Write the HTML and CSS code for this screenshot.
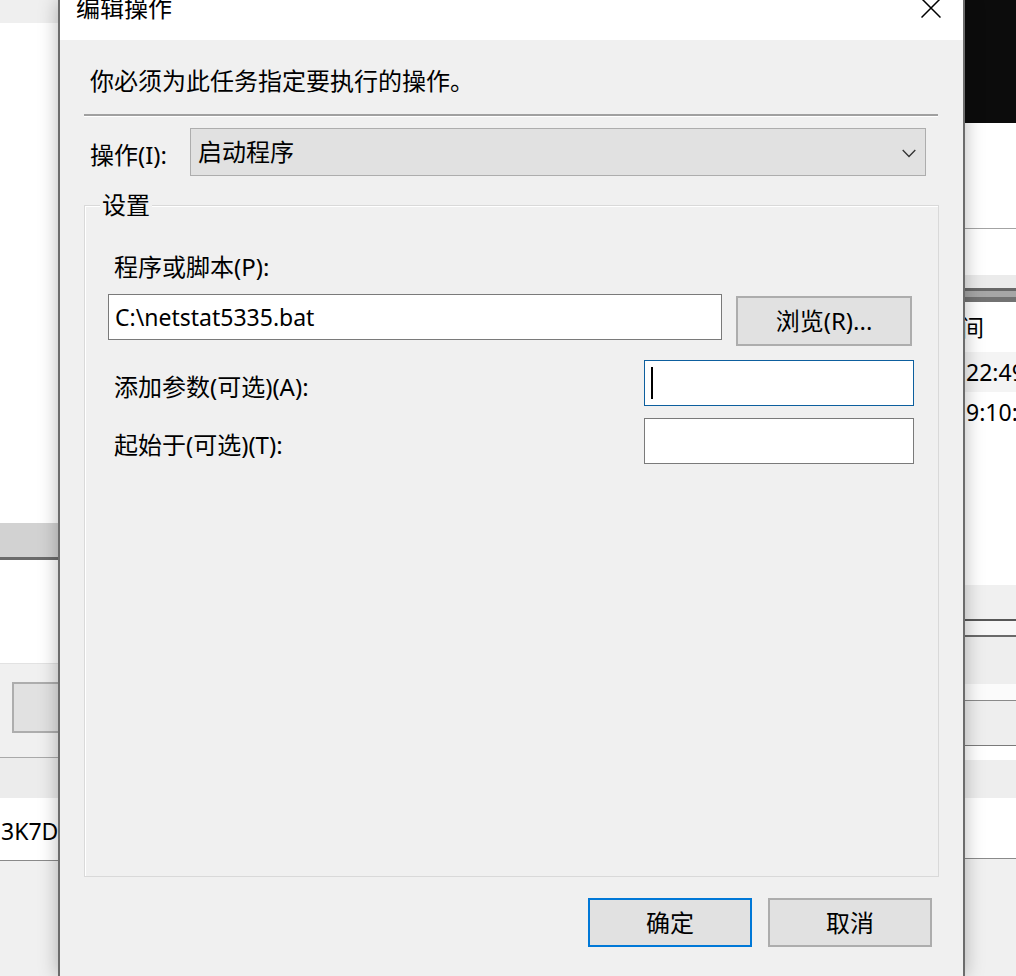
FILE: index.html
```html
<!DOCTYPE html>
<html lang="zh-CN">
<head>
<meta charset="utf-8">
<title>编辑操作</title>
<link rel="stylesheet" href="styles.css">
</head>
<body>
<div class="screen">
  <div class="bg-left">
    <div class="l-top"></div>
    <div class="l-white1"></div>
    <div class="l-band"></div>
    <div class="l-white2"></div>
    <div class="l-gray1"><div class="l-btn"></div></div>
    <div class="l-gray2"></div>
    <div class="l-white3"><span class="l-text">3K7D</span></div>
    <div class="l-gray3"></div>
  </div>

  <div class="dialog">
    <div class="titlebar">
      <div class="title">编辑操作</div>
      <svg class="close" width="20" height="20" viewBox="0 0 20 20" aria-hidden="true">
        <path d="M0.5 0.5 L19.5 19.5 M19.5 0.5 L0.5 19.5" stroke="#000" stroke-width="1.5" fill="none"/>
      </svg>
    </div>

    <div class="instr">你必须为此任务指定要执行的操作。</div>
    <div class="sep"></div>

    <div class="action-row">
      <div class="action-label">操作(I):</div>
      <div class="select">
        <span>启动程序</span>
        <svg class="chev" width="14" height="9" viewBox="0 0 14 9" aria-hidden="true">
          <path d="M0.7 1 L7 7.5 L13.3 1" stroke="#333" stroke-width="1.3" fill="none"/>
        </svg>
      </div>
    </div>

    <div class="group">
      <div class="legend">设置</div>
      <div class="prog-label">程序或脚本(P):</div>
      <div class="prog-row">
        <div class="input prog-input">C:\netstat5335.bat</div>
        <div class="btn browse">浏览(R)...</div>
      </div>
      <div class="field-row first">
        <div class="field-label">添加参数(可选)(A):</div>
        <div class="input small focused"><span class="caret"></span></div>
      </div>
      <div class="field-row">
        <div class="field-label">起始于(可选)(T):</div>
        <div class="input small"></div>
      </div>
    </div>

    <div class="buttons">
      <div class="btn dlg ok">确定</div>
      <div class="btn dlg">取消</div>
    </div>
  </div>

  <div class="bg-right">
    <div class="r-black"></div>
    <div class="r-white1"></div>
    <div class="r-white2"></div>
    <div class="r-light"></div>
    <div class="r-bands"></div>
    <div class="r-head"><span class="r-text head-text">时间</span></div>
    <div class="r-row1"><span class="r-text">22:49:16</span></div>
    <div class="r-row2"><span class="r-text">9:10:27</span></div>
    <div class="r-rest"></div>
    <div class="r-g1"></div>
    <div class="r-g2"></div>
    <div class="r-g3"></div>
    <div class="r-g4"></div>
    <div class="r-g5"></div>
    <div class="r-g6"></div>
    <div class="r-g7"></div>
    <div class="r-g8"></div>
    <div class="r-g9"></div>
  </div>
</div>
</body>
</html>
```

FILE: styles.css
```css
* { box-sizing: border-box; }

html, body {
  margin: 0;
  padding: 0;
  width: 1016px;
  height: 976px;
  overflow: hidden;
  background: #f0f0f0;
}

body {
  font-family: "Noto Sans", "Noto Sans CJK SC", sans-serif;
  font-size: 24px;
  color: #000;
}

.screen {
  display: grid;
  grid-template-columns: 58px 907px 51px;
  height: 976px;
}

/* ---------- left background window ---------- */
.bg-left {
  display: flex;
  flex-direction: column;
  overflow: hidden;
}
.l-top { height: 23px; background: #efefef; flex: none; }
.l-white1 { height: 500px; background: #fff; flex: none; }
.l-band { height: 37px; background: #d2d2d2; border-bottom: 3px solid #6b6b6b; flex: none; }
.l-white2 { height: 104px; background: #fff; border-bottom: 1px solid #e2e2e2; flex: none; }
.l-gray1 {
  height: 94px;
  background: #f0f0f0;
  padding: 18px 0 0 12px;
  border-bottom: 1px solid #a9a9a9;
  flex: none;
}
.l-btn {
  width: 60px;
  height: 51px;
  background: #e1e1e1;
  border: 2px solid #adadad;
}
.l-gray2 { height: 40px; background: #ececec; flex: none; }
.l-white3 {
  height: 63px;
  background: #fff;
  border-bottom: 1px solid #8a8a8a;
  display: flex;
  align-items: center;
  padding-left: 1px;
  flex: none;
}
.l-text { white-space: nowrap; line-height: 30px; margin-top: 4px; font-size: 23px; }
.l-gray3 { flex: 1; background: #f0f0f0; }

/* ---------- dialog ---------- */
.dialog {
  position: relative;
  z-index: 1;
  background: #f0f0f0;
  border-left: 2px solid #6c6c6c;
  border-right: 2px solid #6c6c6c;
  box-shadow: 0 0 18px rgba(0, 0, 0, 0.28);
  display: flex;
  flex-direction: column;
}

.titlebar {
  height: 40px;
  background: #fff;
  display: flex;
  justify-content: space-between;
  align-items: flex-start;
  padding: 0 22px 0 16px;
  flex: none;
}
.title {
  font-size: 24px;
  line-height: 24px;
  margin-top: -4px;
}
.close { margin-top: -2px; display: block; }

.instr {
  margin-top: 26px;
  padding-left: 30px;
  line-height: 30px;
}

.sep {
  margin: 18px 25px 0 24px;
  border-top: 2px solid #a0a0a0;
  border-bottom: 1px solid #fff;
}

.action-row {
  display: flex;
  align-items: center;
  margin-top: 11px;
  padding-left: 30px;
}
.action-label {
  width: 100px;
  line-height: 30px;
  margin-top: 6px;
}
.select {
  width: 736px;
  height: 48px;
  border: 1px solid #adadad;
  background: #e1e1e1;
  display: flex;
  align-items: center;
  justify-content: space-between;
  padding: 0 9px 0 7px;
  line-height: 30px;
}
.chev { display: block; margin-top: 3px; }

.group {
  margin: 29px 24px 0 24px;
  height: 672px;
  border: 1px solid #d9d9d9;
  box-shadow: inset 1px 1px 0 #fff;
  flex: none;
}
.legend {
  margin: -16px 0 0 15px;
  padding: 0 2px;
  background: #f0f0f0;
  width: fit-content;
  line-height: 30px;
}
.prog-label {
  margin-top: 32px;
  padding-left: 29px;
  line-height: 30px;
}
.prog-row {
  display: flex;
  align-items: flex-start;
  margin-top: 12px;
  padding-left: 23px;
}
.input {
  height: 46px;
  background: #fff;
  border: 1px solid #7a7a7a;
  display: flex;
  align-items: center;
  padding-left: 6px;
  line-height: 30px;
  white-space: nowrap;
}
.prog-input { width: 614px; font-size: 23px; }
.input.small { width: 270px; }
.input.focused { border-color: #0d5f9e; }
.caret {
  display: block;
  width: 2px;
  height: 32px;
  background: #000;
}

.btn {
  background: #e1e1e1;
  border: 2px solid #adadad;
  display: flex;
  align-items: center;
  justify-content: center;
  line-height: 30px;
}
.browse {
  width: 176px;
  height: 50px;
  margin: 2px 0 0 14px;
}

.field-row {
  display: flex;
  align-items: center;
  margin-top: 12px;
  padding: 0 24px 0 29px;
}
.field-row.first { margin-top: 14px; }
.field-label {
  flex: 1;
  line-height: 30px;
  margin-top: 8px;
}

.buttons {
  display: flex;
  justify-content: flex-end;
  gap: 16px;
  margin-top: 21px;
  padding-right: 31px;
}
.btn.dlg {
  width: 164px;
  height: 49px;
}
.btn.ok { border-color: #0078d7; }

/* ---------- right background window ---------- */
.bg-right {
  display: flex;
  flex-direction: column;
  overflow: hidden;
}
.bg-right > div { flex: none; }
.r-black { height: 123px; background: #0c0c0c; }
.r-white1 { height: 106px; background: #fff; border-bottom: 1px solid #a3a3a3; }
.r-white2 { height: 46px; background: #fff; }
.r-light { height: 13px; background: #ebebeb; }
.r-bands { height: 14px; background: #a6a6a6; border-top: 3px solid #686868; border-bottom: 5px solid #727272; }
.r-head { height: 50px; background: #fff; display: flex; align-items: center; }
.r-row1 { height: 40px; background: #f4f4f4; display: flex; align-items: center; }
.r-row2 { height: 40px; background: #fff; display: flex; align-items: center; }
.r-text { white-space: nowrap; line-height: 30px; padding-left: 1px; font-size: 23px; }
.head-text { margin-left: -28px; }
.r-rest { height: 153px; background: #fff; }
.r-g1 { height: 36px; background: #f0f0f0; border-bottom: 2px solid #575757; }
.r-g2 { height: 16px; background: #f7f7f7; border-bottom: 2px solid #6a6a6a; }
.r-g3 { height: 47px; background: #eeeeee; }
.r-g4 { height: 17px; background: #fbfbfb; border-bottom: 1px solid #8a8a8a; }
.r-g5 { height: 45px; background: #eeeeee; border-bottom: 1px solid #7a7a7a; }
.r-g6 { height: 14px; background: #fff; }
.r-g7 { height: 38px; background: #eeeeee; }
.r-g8 { height: 61px; background: #fff; border-bottom: 1px solid #8a8a8a; }
.bg-right > .r-g9 { flex: 1; background: #f0f0f0; }
```
